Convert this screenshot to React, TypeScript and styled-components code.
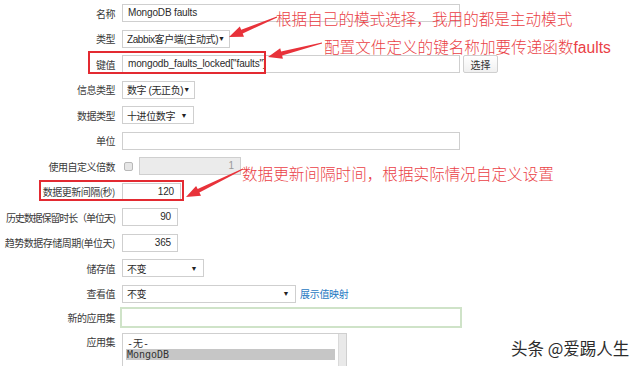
import React from "react";
import styled, { createGlobalStyle } from "styled-components";

const Global = createGlobalStyle`
  html, body { margin: 0; padding: 0; background: #ffffff; }
  body { width: 640px; height: 366px; overflow: hidden; font-family: "Liberation Sans", "Noto Sans CJK SC", sans-serif; }
`;

const Page = styled.div`
  position: relative;
  width: 640px;
  height: 366px;
  overflow: hidden;
  background: #fff;
`;

const Form = styled.div`
  display: flex;
  flex-direction: column;
  gap: 7.5px;
  padding-top: 4px;
`;

const Row = styled.div<{ $mt?: number; $top?: boolean }>`
  display: grid;
  grid-template-columns: 115px 1fr;
  column-gap: 7px;
  align-items: ${(p) => (p.$top ? "start" : "center")};
  margin-top: ${(p) => p.$mt ?? 0}px;
`;

const Label = styled.div<{ $pt?: number; $tight?: boolean }>`
  display: flex;
  justify-content: flex-end;
  font-family: "Noto Sans CJK SC", sans-serif;
  font-size: 10px;
  color: #3a3a3a;
  white-space: nowrap;
  padding-top: ${(p) => p.$pt ?? 0}px;
  letter-spacing: ${(p) => (p.$tight ? -1.1 : -0.5)}px;
`;

const Field = styled.div`
  display: flex;
  align-items: center;
  gap: 3px;
`;

const Box = styled.div<{ $w: number; $right?: boolean; $disabled?: boolean }>`
  box-sizing: border-box;
  width: ${(p) => p.$w}px;
  height: 18px;
  border: 1px solid #cfcfcf;
  background: ${(p) => (p.$disabled ? "#ebebeb" : "#fff")};
  color: ${(p) => (p.$disabled ? "#9a9a9a" : "#2a2a2a")};
  font-family: "Liberation Sans", "Noto Sans CJK SC", sans-serif;
  font-size: 10px;
  letter-spacing: -0.15px;
  line-height: 16px;
  padding: 0 ${(p) => (p.$right ? 6 : 5)}px;
  text-align: ${(p) => (p.$right ? "right" : "left")};
  white-space: nowrap;
  overflow: hidden;
`;

const Select = styled.div<{ $w: number }>`
  box-sizing: border-box;
  width: ${(p) => p.$w}px;
  height: 18px;
  border: 1px solid #cfcfcf;
  background: #fff;
  display: flex;
  align-items: center;
  justify-content: space-between;
  padding: 0 6px 0 4px;
  font-family: "Liberation Sans", "Noto Sans CJK SC", sans-serif;
  font-size: 10px;
  letter-spacing: -0.4px;
  color: #2a2a2a;
  white-space: nowrap;
`;

const Caret = styled.span`
  font-size: 7px;
  color: #222;
`;

const Button = styled.div`
  box-sizing: border-box;
  width: 35px;
  height: 18px;
  border: 1px solid #cfcfcf;
  border-radius: 2px;
  background: linear-gradient(#ffffff, #f0f0f0);
  font-family: "Noto Sans CJK SC", sans-serif;
  font-size: 10px;
  color: #333;
  display: flex;
  align-items: center;
  justify-content: center;
`;

const Check = styled.div`
  box-sizing: border-box;
  width: 9px;
  height: 9px;
  border: 1px solid #b8b8b8;
  border-radius: 2px;
  background: #e6e6e6;
  margin: 0 3px 0 2px;
`;

const LinkText = styled.span`
  font-family: "Noto Sans CJK SC", sans-serif;
  font-size: 10px;
  letter-spacing: -0.3px;
  color: #1e78c2;
  margin-left: 1px;
`;

const GreenInput = styled.div`
  box-sizing: border-box;
  width: 342px;
  height: 21px;
  margin-left: -2px;
  border: 2px solid #cfe3c8;
  background: #fff;
`;

const ListBox = styled.div`
  box-sizing: border-box;
  width: 225px;
  height: 60px;
  border: 1px solid #cfcfcf;
  background: #fff;
  display: flex;
`;

const ListItems = styled.div`
  flex: 1;
  padding: 4px 3px 0 3px;
  display: flex;
  flex-direction: column;
`;

const ListItem = styled.div<{ $sel?: boolean }>`
  font-family: "DejaVu Sans Mono", "Liberation Mono", "Noto Sans CJK SC", monospace;
  font-size: 10px;
  line-height: 11px;
  color: #333;
  background: ${(p) => (p.$sel ? "#c6c6c6" : "transparent")};
  padding-left: 1px;
`;

const ScrollTrack = styled.div`
  width: 7px;
  background: #e9e9e9;
  border-left: 1px solid #dadada;
`;

const Note = styled.div<{ $x: number; $y: number }>`
  position: absolute;
  left: ${(p) => p.$x}px;
  top: ${(p) => p.$y}px;
  font-family: "Noto Sans CJK SC", sans-serif;
  font-size: 15.6px;
  line-height: 18px;
  color: #ea3f46;
  white-space: nowrap;
  font-weight: 300;
`;

const Latin = styled.span`
  font-family: "Liberation Sans", sans-serif;
  font-weight: 400;
`;

const Overlay = styled.svg`
  position: absolute;
  left: 0;
  top: 0;
  pointer-events: none;
`;

const Watermark = styled.div`
  position: absolute;
  left: 511px;
  top: 338px;
  font-family: "Noto Sans CJK SC", sans-serif;
  font-size: 16.5px;
  line-height: 20px;
  color: #2b2b2b;
  white-space: nowrap;
  text-shadow: 0 0 2px #fff;
`;

function arrow(tx: number, ty: number, hx: number, hy: number, headLen = 14, headW = 11, shaftW = 4) {
  const dx = hx - tx;
  const dy = hy - ty;
  const len = Math.hypot(dx, dy);
  const ux = dx / len;
  const uy = dy / len;
  const nx = -uy;
  const ny = ux;
  const bx = hx - ux * headLen;
  const by = hy - uy * headLen;
  const pts = [
    [tx + nx * 0.4, ty + ny * 0.4],
    [bx + (nx * shaftW) / 2, by + (ny * shaftW) / 2],
    [bx + (nx * headW) / 2, by + (ny * headW) / 2],
    [hx, hy],
    [bx - (nx * headW) / 2, by - (ny * headW) / 2],
    [bx - (nx * shaftW) / 2, by - (ny * shaftW) / 2],
    [tx - nx * 0.4, ty - ny * 0.4],
  ];
  return pts.map((p) => `${p[0].toFixed(1)},${p[1].toFixed(1)}`).join(" ");
}

export default function App() {
  return (
    <Page>
      <Global />
      <Form>
        <Row>
          <Label>名称</Label>
          <Field><Box $w={338}>MongoDB faults</Box></Field>
        </Row>
        <Row>
          <Label>类型</Label>
          <Field><Select $w={108}><span>Zabbix客户端(主动式)</span><Caret>▼</Caret></Select></Field>
        </Row>
        <Row>
          <Label>键值</Label>
          <Field><Box $w={338}>mongodb_faults_locked["faults"]</Box><Button>选择</Button></Field>
        </Row>
        <Row>
          <Label>信息类型</Label>
          <Field><Select $w={73}><span>数字 (无正负)</span><Caret>▼</Caret></Select></Field>
        </Row>
        <Row>
          <Label>数据类型</Label>
          <Field><Select $w={72}><span>十进位数字</span><Caret>▼</Caret></Select></Field>
        </Row>
        <Row>
          <Label>单位</Label>
          <Field><Box $w={338} /></Field>
        </Row>
        <Row>
          <Label>使用自定义倍数</Label>
          <Field><Check /><Box $w={102} $right $disabled>1</Box></Field>
        </Row>
        <Row>
          <Label>数据更新间隔(秒)</Label>
          <Field><Box $w={59} $right>120</Box></Field>
        </Row>
        <Row>
          <Label $tight>历史数据保留时长（单位天)</Label>
          <Field><Box $w={56} $right>90</Box></Field>
        </Row>
        <Row>
          <Label>趋势数据存储周期(单位天)</Label>
          <Field><Box $w={56} $right>365</Box></Field>
        </Row>
        <Row>
          <Label>储存值</Label>
          <Field><Select $w={82}><span>不变</span><Caret>▼</Caret></Select></Field>
        </Row>
        <Row>
          <Label>查看值</Label>
          <Field><Select $w={174}><span>不变</span><Caret>▼</Caret></Select><LinkText>展示值映射</LinkText></Field>
        </Row>
        <Row $mt={-3}>
          <Label>新的应用集</Label>
          <Field><GreenInput /></Field>
        </Row>
        <Row $mt={-3} $top>
          <Label $pt={1}>应用集</Label>
          <Field>
            <ListBox>
              <ListItems>
                <ListItem>-无-</ListItem>
                <ListItem $sel>MongoDB</ListItem>
              </ListItems>
              <ScrollTrack />
            </ListBox>
          </Field>
        </Row>
      </Form>

      <Overlay width={640} height={366} viewBox="0 0 640 366">
        <rect x={89} y={52} width={176} height={21} fill="none" stroke="#e32a31" strokeWidth={2} />
        <rect x={40} y={181} width={143} height={19} fill="none" stroke="#e32a31" strokeWidth={2} />
        <polygon points={arrow(277, 17, 229, 37)} fill="#e8323a" />
        <polygon points={arrow(322, 43, 268, 57)} fill="#e8323a" />
        <polygon points={arrow(243, 169, 186, 197)} fill="#e8323a" />
      </Overlay>

      <Note $x={276} $y={9}>根据自己的模式选择，我用的都是主动模式</Note>
      <Note $x={324} $y={37}>配置文件定义的键名称加要传递函数<Latin>faults</Latin></Note>
      <Note $x={242} $y={164}>数据更新间隔时间，根据实际情况自定义设置</Note>

      <Watermark>头条 @爱踢人生</Watermark>
    </Page>
  );
}
